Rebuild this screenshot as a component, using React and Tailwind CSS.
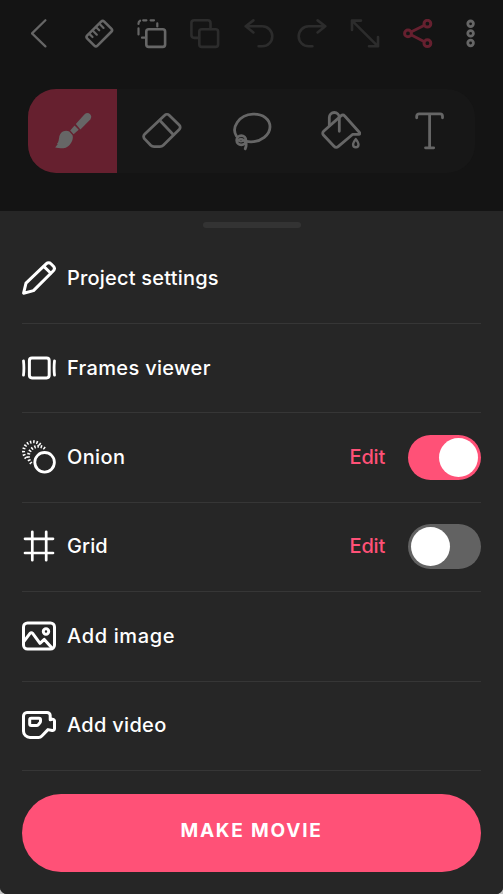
import { useState } from 'react'

function Icon({ size = 34, stroke = 3, className = '', children }) {
  return (
    <svg
      width={size}
      height={size}
      viewBox={`0 0 ${size} ${size}`}
      fill="none"
      stroke="currentColor"
      strokeWidth={stroke}
      strokeLinecap="round"
      strokeLinejoin="round"
      className={`shrink-0 ${className}`}
    >
      {children}
    </svg>
  )
}

const topActions = [
  {
    name: 'Back',
    color: 'text-[#666]',
    icon: <path d="M14.4 1.2 1 14.4 14.4 27.4" strokeWidth="2.2" />,
  },
  {
    name: 'Ruler',
    color: 'text-[#666]',
    icon: (
      <g transform="translate(15.3 14.6) rotate(-45)">
        <rect x="-12" y="-7.2" width="24" height="14.4" rx="2.2" />
        <path d="M-7.2-6.8v4.4M-2.5-6.8v5.8M2.3-6.8v4.4M7-6.8v5.8" strokeWidth="2.2" />
      </g>
    ),
  },
  {
    name: 'Select frames',
    color: 'text-[#666]',
    icon: (
      <>
        <rect x="9.3" y="10.2" width="18.8" height="17.7" rx="2.4" />
        <path
          d="M1.5 5V4.4a3 3 0 0 1 1.6-2.7M6.2 1.3H9.4M13.6 1.3H17M20.3 4.4V7.4M1.5 9.4V15.4M5 18.7H7.8"
          strokeWidth="2.2"
        />
      </>
    ),
  },
  {
    name: 'Copy',
    color: 'text-[#2c2c2c]',
    icon: (
      <>
        <rect x="9.3" y="10.2" width="18.8" height="17.7" rx="2.4" />
        <path d="M9 18.9H4.2a2.8 2.8 0 0 1-2.8-2.8V4.1a2.8 2.8 0 0 1 2.8-2.8h13.5a2.8 2.8 0 0 1 2.8 2.8V10" />
      </>
    ),
  },
  {
    name: 'Undo',
    color: 'text-[#2c2c2c]',
    icon: <path d="M9.4 1.4 1.7 7.3 9.4 13.4M1.7 7.3H18.3a10 10 0 0 1 0 20H14.6" />,
  },
  {
    name: 'Redo',
    color: 'text-[#2c2c2c]',
    icon: <path d="M20.6 1.4 28.3 7.3 20.6 13.4M28.3 7.3H11.7a10 10 0 0 0 0 20H15.4" />,
  },
  {
    name: 'Resize',
    color: 'text-[#2c2c2c]',
    icon: <path d="M11 1.6H2V11M2 1.6 28 27.3M19 27.3h9V18" />,
  },
  {
    name: 'Share',
    color: 'text-[#66202f]',
    icon: (
      <>
        <circle cx="5" cy="14.4" r="3.4" strokeWidth="3" />
        <circle cx="24.4" cy="4.7" r="3.4" strokeWidth="3" />
        <circle cx="24.4" cy="24.2" r="3.4" strokeWidth="3" />
        <path d="M8.4 12.7 21 6.4M8.4 16.1 21 22.5" strokeWidth="2.8" />
      </>
    ),
  },
  {
    name: 'More',
    color: 'text-[#666]',
    icon: (
      <>
        <circle cx="14.6" cy="4.8" r="2.8" strokeWidth="2.8" />
        <circle cx="14.6" cy="14.4" r="2.8" strokeWidth="2.8" />
        <circle cx="14.6" cy="24" r="2.8" strokeWidth="2.8" />
      </>
    ),
  },
]

const tools = [
  {
    name: 'Brush',
    icon: (
      <g fill="currentColor" stroke="none">
        <path d="M22.8 13 31.6 3.2c3.6-3.6 8.8 1.2 5.7 5.2L27.4 18.4z" />
        <path d="M21.6 14.6 25.7 18.8 20.6 23.2 17.2 19.4z" />
        <path d="M16.3 20.6c-3-1.6-7-.7-9 2.5-1.7 2.8-.9 5.7-2.3 8.3l-1.1 1.4.9.3-2.6 3.5c5.8 1.5 11.2.9 14.4-2.7 2.7-3 4-7.2 2.8-10z" />
      </g>
    ),
  },
  {
    name: 'Eraser',
    icon: (
      <>
        <path d="M22.7 4.3 2.6 23.3a3.2 3.2 0 0 0 0 4.6L8.7 34.2a5 5 0 0 0 3.4 1.4h5.8a5 5 0 0 0 3.4-1.4L37.2 18.6a3.2 3.2 0 0 0 0-4.6L27.2 4.2a3.2 3.2 0 0 0-4.5.1z" />
        <path d="M18.1 9.8 31.4 23.8" />
      </>
    ),
  },
  {
    name: 'Lasso',
    icon: (
      <>
        <path d="M4.4 25C-.8 17 6.5 3.6 21 3.1 31.2 2.8 38 8.3 38 15.8 38 24 29 30.8 19 30.8c-1.8 0-3.2-.1-4.6-.4" />
        <circle cx="9.3" cy="29.2" r="4.6" />
        <path d="M6.6 29.2c2.4-2.6 7.3.5 7.6 3.8.1 2-.3 3.3-1 4.8" />
        <path d="M7.2 30.3c2 .8 4 .2 5-1.2" strokeWidth="1.6" />
      </>
    ),
  },
  {
    name: 'Fill',
    icon: (
      <>
        <path d="M20.2 4.6 2.6 20.3a2.6 2.6 0 0 0-.2 3.7l10.6 11.2a3.2 3.2 0 0 0 4.4.2L31.8 23.3h6c1 0 1.4-1.1.7-1.8L23.5 4.8a2.3 2.3 0 0 0-3.3-.2z" />
        <path d="M8.3 14.6V6.5a5 5 0 0 1 10 0V20.3" />
        <path d="M34.8 28.1c1.7 2.3 2.7 4 2.7 5.4a2.7 2.7 0 0 1-5.4 0c0-1.4 1-3.1 2.7-5.4z" strokeWidth="2.4" />
      </>
    ),
  },
  {
    name: 'Text',
    icon: <path d="M6.7 6.8V5.3a2.4 2.4 0 0 1 2.4-2.4H30.1A2.4 2.4 0 0 1 32.5 5.3V6.8M19.6 3V36.8M15.5 36.8h8.2" />,
  },
]

const menuItems = [
  {
    id: 'project',
    label: 'Project settings',
    tracking: 'tracking-[0.2px]',
    icon: (
      <>
        <path d="M1.6 32.2 4 22.2 24.4 2.7a3.2 3.2 0 0 1 4.5 0l2.5 2.6a3.2 3.2 0 0 1 0 4.4L11.5 29.6z" />
        <path d="M22 5.6 28.6 12" />
      </>
    ),
  },
  {
    id: 'frames',
    label: 'Frames viewer',
    tracking: 'tracking-[0.32px]',
    icon: (
      <>
        <rect x="7.4" y="7.1" width="19.8" height="19.8" rx="2.6" />
        <path d="M1.5 9.8Q2.3 17 1.5 24.2M32.5 9.8Q31.7 17 32.5 24.2" strokeWidth="2.8" />
      </>
    ),
  },
  {
    id: 'onion',
    label: 'Onion',
    tracking: 'tracking-[0.35px]',
    editable: true,
    icon: (
      <>
        <circle cx="22.6" cy="22.3" r="9.8" strokeWidth="2.8" />
        <g strokeLinecap="butt" strokeDasharray="1.5 1.7">
          <path d="M4.2 18.2A9.7 9.7 0 1 1 18.4 4.8" />
          <path d="M9.4 23.4A9.7 9.7 0 0 1 23.4 9.2" />
        </g>
      </>
    ),
  },
  {
    id: 'grid',
    label: 'Grid',
    tracking: 'tracking-[0.1px]',
    editable: true,
    icon: <path d="M10.3 2.8V31.2M24.2 2.8V31.2M3 9.8H31M3 24H31" strokeWidth="2.7" />,
  },
  {
    id: 'image',
    label: 'Add image',
    tracking: 'tracking-[0.65px]',
    icon: (
      <>
        <rect x="1.5" y="4" width="31" height="26" rx="4" />
        <circle cx="24" cy="12.5" r="2.7" />
        <path d="M2 22.4 8.2 14.2a1.5 1.5 0 0 1 2.3 0L18 24.4 22.3 20.4 30 29" />
      </>
    ),
  },
  {
    id: 'video',
    label: 'Add video',
    tracking: 'tracking-[0.3px]',
    icon: (
      <>
        <path d="M5 4.4H25A3.2 3.2 0 0 1 28.2 7.6V11.7L30.2 11.2A2 2 0 0 1 32.5 13V20.6A2 2 0 0 1 30.2 22.5L26 21.6 19.8 28A4.5 4.5 0 0 1 16.5 29.5H8A6.5 6.5 0 0 1 1.5 22.9V8A3.6 3.6 0 0 1 5 4.4z" />
        <path d="M9.2 10.3H17a1.5 1.5 0 0 1 1.5 1.5v1.5q0 1-.8 1.8l-1.4 1.6q-.7.8-1.7.8H9.2a1.5 1.5 0 0 1-1.5-1.5V11.8a1.5 1.5 0 0 1 1.5-1.5z" />
      </>
    ),
  },
]

function Toggle({ on, onClick }) {
  return (
    <button
      role="switch"
      aria-checked={on}
      onClick={onClick}
      className={`flex items-center w-[73px] h-[45px] p-[3px] rounded-full cursor-pointer transition-colors ${
        on ? 'bg-[#ff5177] justify-end' : 'bg-[#626262] justify-start'
      }`}
    >
      <span className="size-[39px] rounded-full bg-white" />
    </button>
  )
}

function MenuRow({ item, on, onToggle }) {
  return (
    <li className="flex items-center h-[89.4px] pb-px border-b border-[#363636]">
      <Icon>{item.icon}</Icon>
      <span className={`ml-[11px] whitespace-nowrap ${item.tracking}`}>{item.label}</span>
      {item.editable && (
        <div className="ml-auto flex items-center">
          <button className="mr-[23px] tracking-[-0.2px] text-[#ff5177] cursor-pointer">Edit</button>
          <Toggle on={on} onClick={onToggle} />
        </div>
      )}
    </li>
  )
}

export default function App() {
  const [enabled, setEnabled] = useState({ onion: true, grid: false })

  const toggle = (id) => {
    setEnabled({ ...enabled, [id]: !enabled[id] })
  }

  return (
    <div className="w-full h-screen bg-[#c4c4c4]">
      <div className="flex flex-col h-full overflow-hidden rounded-b-[7px] bg-[#141414] font-['Inter',sans-serif]">
        {/* Canvas toolbar, dimmed behind the sheet */}
        <header className="h-[211px] shrink-0">
          <div className="flex justify-between pl-[31px] pr-[17px] pt-[19px]">
            {topActions.map((action) => (
              <button key={action.name} aria-label={action.name} className={action.color}>
                <Icon size={30} stroke={2.6} className="block">{action.icon}</Icon>
              </button>
            ))}
          </div>
          <div className="flex ml-[28px] mr-[28px] mt-[40px] h-[84px] rounded-[28px] overflow-hidden bg-[#171717] text-[#666]">
            {tools.map((tool, i) => (
              <button
                key={tool.name}
                aria-label={tool.name}
                className={`flex flex-1 items-center justify-center ${i === 0 ? 'bg-[#66202f]' : ''}`}
              >
                <Icon size={40} stroke={2.8}>{tool.icon}</Icon>
              </button>
            ))}
          </div>
        </header>

        {/* Bottom sheet */}
        <section className="flex flex-col flex-1 bg-[#262626] px-[22px] pt-[11px]">
          <div className="w-[98px] h-[6px] mx-auto rounded-full bg-[#333]" />
          <ul className="mt-[6.6px] text-xl font-medium text-white">
            {menuItems.map((item) => (
              <MenuRow key={item.id} item={item} on={enabled[item.id]} onToggle={() => toggle(item.id)} />
            ))}
          </ul>
          <button className="mt-[22.6px] h-[78px] shrink-0 rounded-full bg-[#ff5177] pb-0.5 text-white text-[19px] font-bold tracking-[1.8px] cursor-pointer">
            MAKE MOVIE
          </button>
        </section>
      </div>
    </div>
  )
}
